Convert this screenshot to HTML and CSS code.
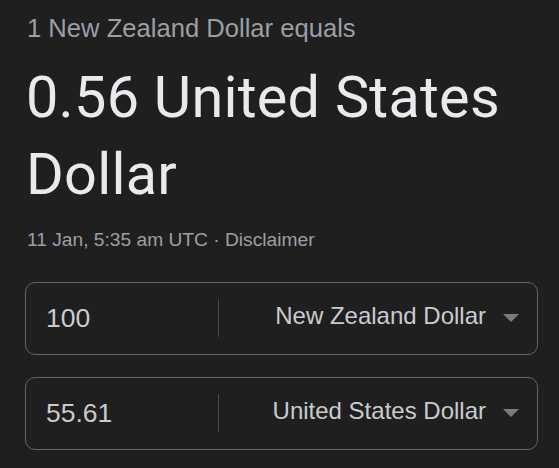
FILE: index.html
```html
<!DOCTYPE html>
<html lang="en">
<head>
<meta charset="utf-8">
<title>Currency converter</title>
<link rel="stylesheet" href="styles.css">
</head>
<body>
<main class="card">
  <div class="equals">1 New Zealand Dollar equals</div>
  <div class="result">0.56 United States<br>Dollar</div>
  <div class="meta">11 Jan, 5:35 am UTC · <span class="disclaimer">Disclaimer</span></div>
  <div class="converter">
    <div class="row">
      <div class="amount">100</div>
      <div class="divider"></div>
      <div class="currency">
        <span class="currency-name">New Zealand Dollar</span>
        <svg class="caret" width="16" height="8" viewBox="0 0 16 8"><path d="M0 0H16L8 8Z"/></svg>
      </div>
    </div>
    <div class="row">
      <div class="amount">55.61</div>
      <div class="divider"></div>
      <div class="currency">
        <span class="currency-name">United States Dollar</span>
        <svg class="caret" width="16" height="8" viewBox="0 0 16 8"><path d="M0 0H16L8 8Z"/></svg>
      </div>
    </div>
  </div>
</main>
</body>
</html>
```

FILE: styles.css
```css
html, body {
  margin: 0;
  padding: 0;
  background: #1f1f1f;
}

.card {
  padding: 12px 21px 0 25px;
  font-family: "Liberation Sans", Arial, sans-serif;
}

.equals {
  padding-left: 2px;
  font-size: 25.6px;
  line-height: 32px;
  color: #9aa0a6;
}

.result {
  margin-top: 16px;
  padding-left: 1px;
  font-family: Roboto, "Noto Sans", sans-serif;
  font-size: 57.6px;
  line-height: 76.8px;
  letter-spacing: 0.25px;
  color: #e8eaed;
}

.meta {
  margin-top: 14px;
  padding-left: 2px;
  font-size: 19.2px;
  line-height: 24px;
  color: #9aa0a6;
}

.converter {
  margin-top: 30px;
  display: flex;
  flex-direction: column;
  gap: 22px;
}

.row {
  display: flex;
  align-items: center;
  height: 71px;
  border: 1px solid #5f6368;
  border-radius: 10px;
}

.amount {
  width: 172px;
  padding-left: 20px;
  font-size: 26.5px;
  color: #c9cbce;
}

.divider {
  width: 1px;
  height: 38px;
  background: #48494b;
}

.currency {
  flex: 1;
  display: flex;
  align-items: center;
  justify-content: flex-end;
  gap: 16px;
  padding-right: 18px;
  font-size: 24px;
  color: #c9cbce;
}

.currency-name {
  position: relative;
  top: -2px;
  left: -1px;
}

.caret {
  display: block;
  fill: #7a7b7d;
}
```
